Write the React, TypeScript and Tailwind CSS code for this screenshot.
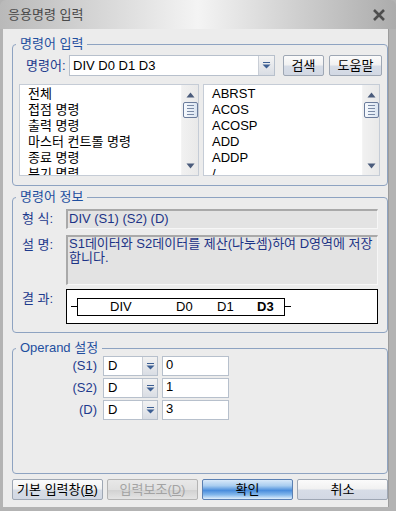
import React from 'react';

const FONT = "font-['Liberation_Sans','Noto_Sans_CJK_KR',sans-serif]";

const DropArrow = () => (
  <svg width="9" height="7" viewBox="0 0 9 7">
    <rect x="1" y="0" width="7" height="1" fill="#3d5f93" />
    <path d="M0.5 2.5 L8.5 2.5 L4.5 6.5 Z" fill="#3d5f93" />
  </svg>
);

const ScrollBar = () => (
  <div className="w-[17px] h-full flex flex-col items-center bg-[linear-gradient(to_right,#f1f1f1,#e9e9e9)] border-l border-[#f4f4f4]">
    <svg width="9" height="6" viewBox="0 0 9 6" className="mt-[7px]">
      <path d="M0.5 5.5 L8.5 5.5 L4.5 0.5 Z" fill="#4b5c7c" />
    </svg>
    <div className="mt-[4px] w-[15px] h-[16px] rounded-[2px] border border-[#6b7c9c] bg-[linear-gradient(to_right,#f6f9fd,#dbe5f1)] flex flex-col items-center justify-center gap-[2px]">
      <div className="w-[7px] h-px bg-[#7a8aa6]" />
      <div className="w-[7px] h-px bg-[#7a8aa6]" />
      <div className="w-[7px] h-px bg-[#7a8aa6]" />
      <div className="w-[7px] h-px bg-[#7a8aa6]" />
    </div>
    <div className="flex-1" />
    <svg width="9" height="6" viewBox="0 0 9 6" className="mb-[6px]">
      <path d="M0.5 0.5 L8.5 0.5 L4.5 5.5 Z" fill="#4b5c7c" />
    </svg>
  </div>
);

const ListBox = ({ items, width }: { items: string[]; width: string }) => (
  <div className={`${width} h-[92px] bg-white border border-[#c5ccd6] flex overflow-hidden`}>
    <div className="flex-1 pl-[8px] pt-[1px] text-[13px] leading-[16px] text-black overflow-hidden">
      {items.map((it, i) => (
        <div key={i} className="whitespace-nowrap">{it}</div>
      ))}
    </div>
    <ScrollBar />
  </div>
);

const Btn = ({
  children,
  width,
  kind = 'normal',
}: {
  children: React.ReactNode;
  width: string;
  kind?: 'normal' | 'primary' | 'disabled';
}) => {
  const look =
    kind === 'primary'
      ? 'border-[#5b80b2] text-black bg-[linear-gradient(to_bottom,#d9e9f9_0%,#a9cdf0_30%,#4a8ddc_55%,#84b8ec_78%,#e2effb_100%)]'
      : kind === 'disabled'
      ? 'border-[#b4b4b4] text-[#a3a3a3] bg-[linear-gradient(to_bottom,#e8e8e8_0%,#e0e0e0_50%,#d2d2d2_55%,#e4e4e4_100%)]'
      : 'border-[#9ea7b4] text-black bg-[linear-gradient(to_bottom,#fbfbfb_0%,#f1f1f1_48%,#d7dde7_52%,#d2d8e3_100%)]';
  return (
    <div className={`${width} h-[21px] border rounded-[2px] flex items-center justify-center text-[13px] leading-none ${look}`}>
      {children}
    </div>
  );
};

const Legend = ({ children }: { children: React.ReactNode }) => (
  <legend className="ml-[3px] px-[4px] h-[16px] leading-[16px] text-[13px] text-[#1f4f9f]">{children}</legend>
);

const OperandRow = ({ label, value }: { label: string; value: string }) => (
  <div className="flex items-center h-[20px]">
    <div className="w-[85px] text-right text-[13px] text-[#1d3a8c] pr-[1px]">{label}</div>
    <div className="ml-[5px] w-[55px] h-[20px] bg-white border border-[#b7c0cc] flex">
      <div className="flex-1 pl-[4px] text-[13px] leading-[18px]">D</div>
      <div className="w-[15px] h-full bg-[linear-gradient(to_bottom,#f2f2f2,#d9dde4)] border-l border-[#c9ced6] flex items-center justify-center">
        <DropArrow />
      </div>
    </div>
    <div className="ml-[4px] w-[67px] h-[20px] bg-white border border-[#b7c0cc] pl-[3px] text-[13px] leading-[16px]">
      {value}
    </div>
  </div>
);

export default function App() {
  return (
    <div className={`w-[396px] h-[511px] bg-[#b3b3b3] flex flex-col ${FONT} overflow-hidden`}>
      {/* title bar */}
      <div className="h-[29px] shrink-0 flex items-center justify-between pl-[8px] pr-[10px] bg-[linear-gradient(to_right,#b9b9b9_0%,#d6d6d6_25%,#f4f4f4_50%,#cfcfcf_75%,#acacac_100%)] rounded-t-[6px]">
        <span className="text-[13px] text-[#4a4a4a]">응용명령 입력</span>
        <svg width="14" height="12" viewBox="0 0 14 12">
          <path d="M2 1 L12 11 M12 1 L2 11" stroke="#4e4e4e" strokeWidth="2.6" />
        </svg>
      </div>

      {/* client area */}
      <div className="flex-1 ml-[3px] mr-[7px] mb-[4px] bg-[#ececec] border-r border-[#9c9c9c] pl-[9px] pr-[1px] pt-[7px] flex flex-col">
        {/* 명령어 입력 */}
        <fieldset className="w-[376px] h-[150px] border border-[#8ea3c1] rounded-[4px] flex flex-col">
          <Legend>명령어 입력</Legend>
          <div className="mt-[3px] flex items-center h-[21px]">
            <span className="ml-[13px] w-[43px] text-[13px] text-[#1d3a8c]">명령어:</span>
            <div className="w-[206px] h-[21px] bg-white border border-[#b7c0cc] flex">
              <div className="flex-1 pl-[3px] text-[13px] leading-[19px]">DIV D0 D1 D3</div>
              <div className="w-[16px] h-full bg-[linear-gradient(to_bottom,#f4f4f4,#d9dde4)] border-l border-[#c9ced6] flex items-center justify-center">
                <DropArrow />
              </div>
            </div>
            <div className="ml-[8px]">
              <Btn width="w-[41px]">검색</Btn>
            </div>
            <div className="ml-[5px]">
              <Btn width="w-[53px]">도움말</Btn>
            </div>
          </div>
          <div className="mt-[8px] ml-[6px] flex gap-[4px]">
            <ListBox
              width="w-[180px]"
              items={['전체', '접점 명령', '출력 명령', '마스터 컨트롤 명령', '종료 명령', '분기 명령']}
            />
            <ListBox width="w-[177px]" items={['ABRST', 'ACOS', 'ACOSP', 'ADD', 'ADDP', '/']} />
          </div>
        </fieldset>

        {/* 명령어 정보 */}
        <fieldset className="mt-[3px] w-[376px] h-[144px] border border-[#8ea3c1] rounded-[4px] flex flex-col">
          <Legend>명령어 정보</Legend>
          <div className="mt-[4px] flex h-[20px]">
            <span className="ml-[9px] w-[44px] text-[13px] leading-[20px] text-[#1d3a8c]">형 식:</span>
            <div className="w-[312px] bg-[#e3e3e3] border-t-2 border-l-2 border-[#a9a9a9] border-b border-r border-b-[#f6f6f6] border-r-[#f6f6f6] text-[13px] leading-[16px] text-[#1c3386] pl-[1px]">
              DIV (S1) (S2) (D)
            </div>
          </div>
          <div className="mt-[6px] flex h-[50px]">
            <span className="ml-[9px] w-[44px] text-[13px] leading-[20px] text-[#1d3a8c]">설 명:</span>
            <div className="w-[312px] bg-[#e3e3e3] border-t-2 border-l-2 border-[#a9a9a9] border-b border-r border-b-[#f6f6f6] border-r-[#f6f6f6] text-[13px] leading-[14px] text-[#1c3386] pl-[1px] pr-[4px]">
              S1데이터와 S2데이터를 제산(나눗셈)하여 D영역에 저장합니다.
            </div>
          </div>
          <div className="mt-[4px] flex h-[35px]">
            <span className="ml-[9px] w-[44px] text-[13px] leading-[20px] text-[#1d3a8c]">결 과:</span>
            <div className="w-[312px] bg-white border border-black flex items-center pl-[4px]">
              <div className="w-[6px] h-px bg-black" />
              <div className="w-[208px] h-[18px] border border-black flex items-center text-[13px] leading-none">
                <span className="ml-[32px] w-[66px]">DIV</span>
                <span className="w-[41px]">D0</span>
                <span className="w-[40px]">D1</span>
                <span className="font-bold">D3</span>
              </div>
              <div className="w-[6px] h-px bg-black" />
            </div>
          </div>
        </fieldset>

        {/* Operand 설정 */}
        <fieldset className="mt-[7px] w-[376px] h-[134px] border border-[#8ea3c1] rounded-[4px] flex flex-col gap-[2px]">
          <Legend>Operand 설정</Legend>
          <OperandRow label="(S1)" value="0" />
          <OperandRow label="(S2)" value="1" />
          <OperandRow label="(D)" value="3" />
        </fieldset>

        {/* bottom buttons */}
        <div className="mt-[5px] flex w-[376px] justify-between">
          <Btn width="w-[91px]">
            기본 입력창(<span className="underline">B</span>)
          </Btn>
          <Btn width="w-[91px]" kind="disabled">
            입력보조(<span className="underline">D</span>)
          </Btn>
          <Btn width="w-[91px]" kind="primary">확인</Btn>
          <Btn width="w-[91px]">취소</Btn>
        </div>
      </div>
    </div>
  );
}
